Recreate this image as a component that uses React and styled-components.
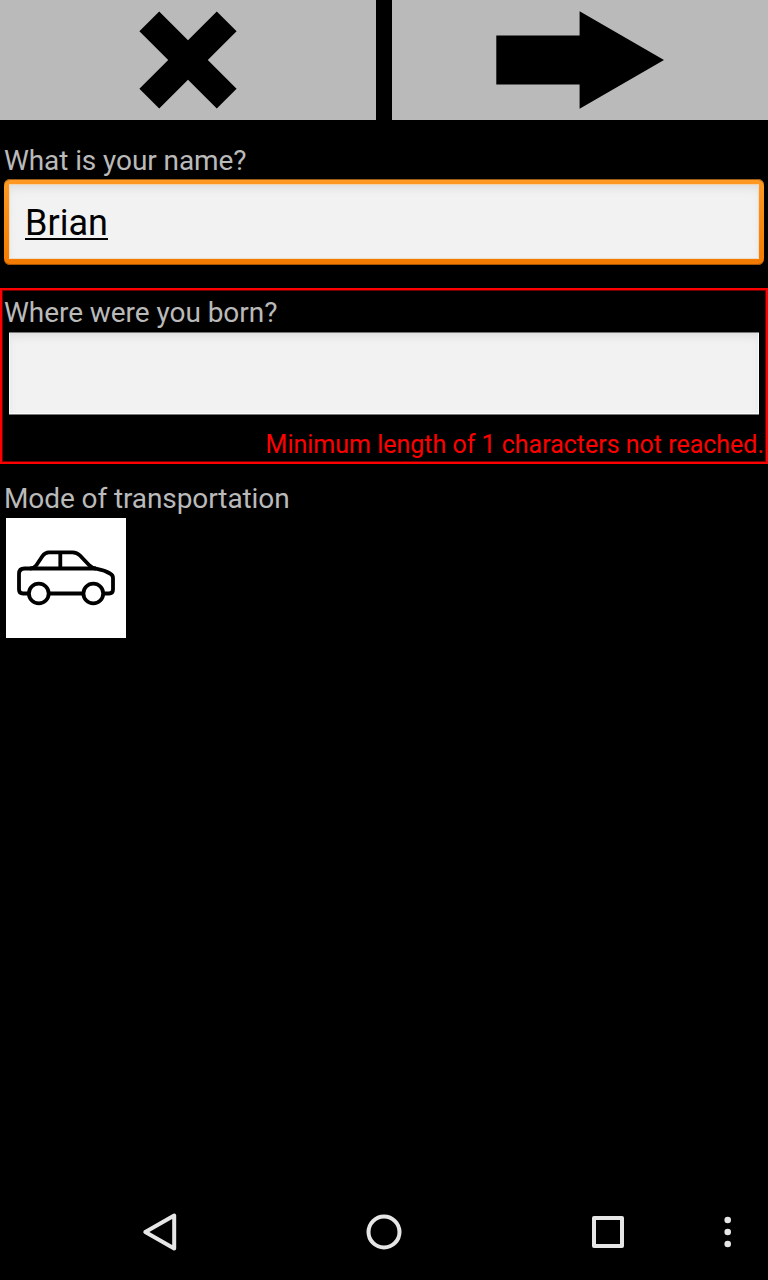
import React from "react";
import styled, { createGlobalStyle } from "styled-components";

const GlobalStyle = createGlobalStyle`
  body {
    margin: 0;
    background: #000;
    font-family: Roboto, sans-serif;
  }
`;

const Screen = styled.div`
  display: flex;
  flex-direction: column;
  height: 1280px;
  background: #000;
  overflow: hidden;
`;

const Toolbar = styled.header`
  display: grid;
  grid-template-columns: 1fr 1fr;
  gap: 16px;
  height: 120px;
  flex: none;
`;

const ToolbarButton = styled.button`
  display: flex;
  padding: 0;
  border: 0;
  background: #bababa;
`;

const Icon = styled.svg`
  display: block;
  width: ${(p) => p.$w}px;
  height: ${(p) => p.$h}px;
`;

const Form = styled.main`
  flex: 1;
  display: flex;
  flex-direction: column;
  padding-top: 24px;
`;

const Field = styled.section`
  box-sizing: border-box;
  padding: 0 4px;
`;

const InvalidField = styled(Field)`
  height: 176px;
  margin: 23px 0 18px;
  padding: 6px 2px 0;
  border: 2px solid #f00;
  box-shadow: inset 0 0 0 1px #700000;
`;

const Label = styled.label`
  display: block;
  height: ${(p) => p.$height || 35}px;
  line-height: 33px;
  font-size: 28px;
  letter-spacing: ${(p) => p.$tracking || -0.09}px;
  color: #bababa;
  white-space: nowrap;
`;

const FocusRing = styled.div`
  box-sizing: border-box;
  height: 86px;
  padding: 5px 5px 6px;
  border-radius: 6px;
  background: linear-gradient(#ff9a24, #f47a00);
  box-shadow: inset 0 1px 0 #9c5c14, inset 0 -1px 0 #a85400;
`;

const TextBox = styled.div`
  box-sizing: border-box;
  height: ${(p) => p.$height}px;
  padding: 17px 16px 0;
  background: #f2f2f2;
  box-shadow: inset 1px 0 0 ${(p) => p.$edge}, inset -1px 0 0 ${(p) => p.$edge},
    inset 0 -1px 0 ${(p) => p.$edge}, inset 0 5px 10px -2px #dcdcdc;
  font-size: 36px;
  line-height: 42px;
  color: #000;
`;

const FocusedTextBox = styled(TextBox)`
  border-top: 1px solid #f2d3aa;
`;

const EmptyTextBox = styled(TextBox)`
  margin: 0 5px;
  border-top: 1px solid #777;
  border-bottom: 1px solid #777;
`;

const TypedText = styled.span`
  display: block;
  width: fit-content;
  height: 36px;
  line-height: 42px;
  border-bottom: 2px solid #000;
`;

const ErrorText = styled.p`
  margin: 15px 0 0;
  font-size: 25px;
  line-height: 29px;
  letter-spacing: -0.01px;
  color: #f00;
  text-align: right;
  white-space: nowrap;
`;

const Tile = styled.div`
  width: 120px;
  height: 120px;
  margin-left: 2px;
  background: #fff;
`;

const NavBar = styled.nav`
  flex: none;
  display: grid;
  grid-template-columns: 48px 224px 224px 224px 48px;
  height: 96px;
`;

const NavItem = styled.div`
  display: flex;
  justify-content: center;
  align-items: center;
`;

const NavIcon = ({ children }) => (
  <Icon $w={48} $h={48} viewBox="0 0 48 48" fill="none" stroke="#e6e6e6" strokeWidth="4">
    {children}
  </Icon>
);

export default function App() {
  return (
    <>
      <GlobalStyle />
      <Screen>
        <Toolbar>
          <ToolbarButton aria-label="Cancel">
            <Icon $w={376} $h={120} viewBox="0 0 376 120">
              <path d="M159.2 11.4 188 40.2l28.8-28.8 19.8 19.8L207.8 60l28.8 28.8-19.8 19.8L188 79.8l-28.8 28.8-19.8-19.8L168.2 60 139.4 31.2z" />
            </Icon>
          </ToolbarButton>
          <ToolbarButton aria-label="Next">
            <Icon $w={376} $h={120} viewBox="0 0 376 120">
              <path d="M104.3 35.5H187.6V11.3L272 60l-84.4 48.7V84.5H104.3z" />
            </Icon>
          </ToolbarButton>
        </Toolbar>

        <Form>
          <Field>
            <Label>What is your name?</Label>
            <FocusRing>
              <FocusedTextBox $height={75} $edge="#eddcc8">
                <TypedText>Brian</TypedText>
              </FocusedTextBox>
            </FocusRing>
          </Field>

          <InvalidField>
            <Label $height={36} $tracking={-0.05}>Where were you born?</Label>
            <EmptyTextBox $height={83} $edge="#fcfcfc" />
            <ErrorText>Minimum length of 1 characters not reached.</ErrorText>
          </InvalidField>

          <Field>
            <Label $height={36}>Mode of transportation</Label>
            <Tile>
              <Icon $w={120} $h={120} viewBox="0 0 120 120" fill="none" stroke="#000" strokeWidth="3.8" strokeLinejoin="round">
                <path d="M22 75.5H17Q13 75.5 13 71.5V56Q13 50.5 18.5 50.5H24Q28 50.5 30.5 47L36.5 38Q39 34.3 43 34.3H66.5Q71 34.3 74 37.5L83 47Q86 50.3 91 50.9Q99 52.5 104 55.5Q107 57 107 60V71.5Q107 75.5 103 75.5H98.5" />
                <path d="M24 50.5H90M54.3 34.3V50.5M43.5 75.5H77" />
                <circle cx="32.8" cy="75.5" r="9.9" />
                <circle cx="87.3" cy="75.5" r="9.9" />
              </Icon>
            </Tile>
          </Field>
        </Form>

        <NavBar>
          <span />
          <NavItem>
            <NavIcon>
              <path d="M38.2 7.5V40.5L9.3 24z" strokeLinejoin="round" />
            </NavIcon>
          </NavItem>
          <NavItem>
            <NavIcon>
              <circle cx="24" cy="24" r="15.5" />
            </NavIcon>
          </NavItem>
          <NavItem>
            <NavIcon>
              <rect x="10" y="10" width="28" height="28" strokeLinejoin="round" />
            </NavIcon>
          </NavItem>
          <NavItem>
            <Icon $w={48} $h={48} viewBox="0 0 48 48" fill="#e6e6e6">
              <circle cx="7.7" cy="12" r="3.3" />
              <circle cx="7.7" cy="24" r="3.3" />
              <circle cx="7.7" cy="36" r="3.3" />
            </Icon>
          </NavItem>
        </NavBar>
      </Screen>
    </>
  );
}
